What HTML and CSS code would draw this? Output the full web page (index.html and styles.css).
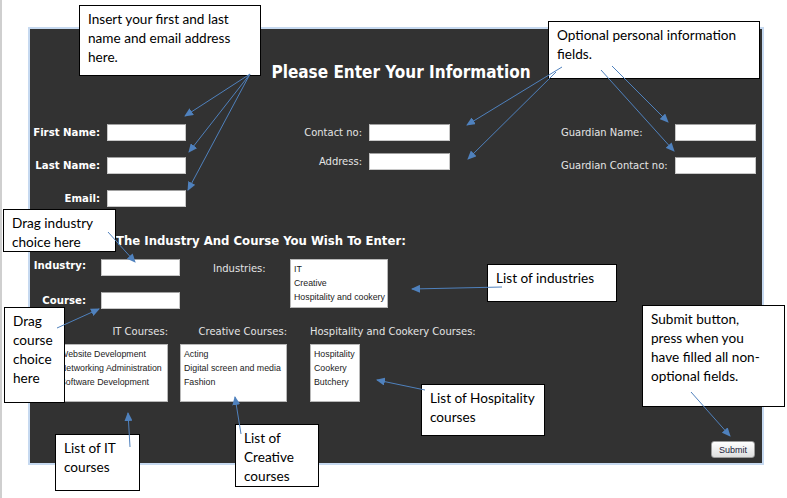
FILE: index.html
```html
<!DOCTYPE html>
<html lang="en">
<head>
  <meta charset="UTF-8" />
  <title>Student Enrolment Form</title>
  <link rel="stylesheet" href="styles.css">
</head>
<body>
  <div class="page">

    <!-- Enrolment form -->
    <main class="panel">
      <h1>Please Enter Your Information</h1>

      <div class="personal">
        <div class="group group-main">
          <label>First Name:</label><input type="text" />
          <label>Last Name:</label><input type="text" />
          <label>Email:</label><input type="text" />
        </div>
        <div class="group group-contact">
          <label>Contact no:</label><input type="text" />
          <label>Address:</label><input type="text" />
        </div>
        <div class="group group-guardian">
          <label>Guardian Name:</label><input type="text" />
          <label>Guardian Contact no:</label><input type="text" />
        </div>
      </div>

      <h2>The Industry And Course You Wish To Enter:</h2>

      <div class="choice">
        <div class="group group-drop">
          <label class="industry-label">Industry:</label><input type="text" />
          <label>Course:</label><input type="text" />
        </div>
        <span class="list-title">Industries:</span>
        <ul class="list list-industries">
          <li>IT</li>
          <li>Creative</li>
          <li>Hospitality and cookery</li>
        </ul>
      </div>

      <div class="courses">
        <div class="course course-it">
          <span class="list-title">IT Courses:</span>
          <ul class="list">
            <li>Website Development</li>
            <li>Networking Administration</li>
            <li>Software Development</li>
          </ul>
        </div>
        <div class="course course-creative">
          <span class="list-title">Creative Courses:</span>
          <ul class="list">
            <li>Acting</li>
            <li>Digital screen and media</li>
            <li>Fashion</li>
          </ul>
        </div>
        <div class="course course-hospitality">
          <span class="list-title">Hospitality and Cookery Courses:</span>
          <ul class="list">
            <li>Hospitality</li>
            <li>Cookery</li>
            <li>Butchery</li>
          </ul>
        </div>
      </div>

      <div class="actions">
        <button type="button">Submit</button>
      </div>
    </main>

    <!-- Annotation callouts -->
    <div class="note note-name">Insert your first and last<br>name and email address<br>here.</div>
    <div class="note note-optional">Optional personal information<br>fields.</div>
    <div class="note note-industry">Drag industry<br>choice here</div>
    <div class="note note-course">Drag<br>course<br>choice<br>here</div>
    <div class="note note-it">List of IT<br>courses</div>
    <div class="note note-creative">List of<br>Creative<br>courses</div>
    <div class="note note-industries">List of industries</div>
    <div class="note note-hospitality">List of Hospitality<br>courses</div>
    <div class="note note-submit">Submit button,<br>press when you<br>have filled all non-<br>optional fields.</div>

    <svg class="arrows" width="787" height="498" viewBox="0 0 787 498">
      <defs>
        <marker id="head" markerUnits="userSpaceOnUse" markerWidth="9" markerHeight="8" refX="8" refY="4" orient="auto">
          <path d="M0 0 L9 4 L0 8 Z" fill="#4f81bd" />
        </marker>
      </defs>
      <g stroke="#4f81bd" stroke-width="1" fill="none" marker-end="url(#head)">
        <line x1="248" y1="74" x2="183" y2="116" />
        <line x1="248" y1="74" x2="187" y2="152" />
        <line x1="248" y1="74" x2="186" y2="190" />
        <line x1="560" y1="67" x2="465" y2="125" />
        <line x1="554" y1="72" x2="466" y2="159" />
        <line x1="599" y1="70" x2="672" y2="151" />
        <line x1="610" y1="66" x2="666" y2="122" />
        <line x1="106" y1="232" x2="133" y2="262" />
        <line x1="55" y1="328" x2="97" y2="309" />
        <line x1="128" y1="447" x2="126" y2="413" />
        <line x1="239" y1="434" x2="233" y2="397" />
        <line x1="500" y1="287" x2="410" y2="289" />
        <line x1="423" y1="390" x2="375" y2="380" />
        <line x1="689" y1="392" x2="728" y2="436" />
      </g>
    </svg>

  </div>
</body>
</html>
```

FILE: styles.css
```css
* {
  margin: 0;
  padding: 0;
  box-sizing: border-box;
}

body {
  background: #ffffff;
  font-family: "Liberation Sans", Arial, sans-serif;
}

.page {
  position: relative;
  width: 787px;
  height: 498px;
  border-left: 2px solid #cfcfcf;
  padding: 27px 0 0 26px;
}

.panel {
  display: flex;
  flex-direction: column;
  width: 736px;
  height: 438px;
  background: #323232;
  border: 2px solid #c6d9f0;
  color: #e4e4e4;
}

h1 {
  margin-top: 32px;
  padding-left: 10px;
  text-align: center;
  font-family: "DejaVu Sans Condensed", "DejaVu Sans", sans-serif;
  font-size: 17px;
  line-height: 22px;
  color: #ffffff;
}

label {
  font-family: "DejaVu Sans Condensed", "DejaVu Sans", sans-serif;
  font-size: 11.1px;
  line-height: 14px;
  white-space: nowrap;
}

input {
  height: 17px;
  background: #ffffff;
  border: 1px solid #c8c8c8;
  border-top-color: #a0a0a0;
}

/* Personal details */
.personal {
  display: flex;
  align-items: flex-start;
  margin-top: 41px;
}

.group {
  display: grid;
  align-items: center;
  align-content: start;
  column-gap: 7px;
}

.group-main {
  grid-template-columns: 70px 79px;
  row-gap: 16px;
}

.group-main label,
.group-drop label {
  font-size: 11.3px;
  font-weight: bold;
  color: #ffffff;
  text-align: right;
}

.group-contact {
  grid-template-columns: 100px 81px;
  row-gap: 12px;
  margin-left: 76px;
}

.group-contact label {
  text-align: right;
}

.group-guardian {
  grid-template-columns: 107px 81px;
  row-gap: 16px;
  margin-left: 111px;
}

/* Industry + course choice */
h2 {
  margin-top: 26px;
  padding-left: 86px;
  font-family: "DejaVu Sans Condensed", "DejaVu Sans", sans-serif;
  font-size: 13px;
  line-height: 16px;
  color: #ffffff;
}

.choice {
  display: flex;
  align-items: flex-start;
  margin-top: 10px;
}

.group-drop {
  grid-template-columns: 56px 79px;
  column-gap: 15px;
  row-gap: 16px;
}

.industry-label {
  align-self: start;
}

.list-title {
  font-family: "DejaVu Sans Condensed", "DejaVu Sans", sans-serif;
  font-size: 11.1px;
  line-height: 15px;
  white-space: nowrap;
}

.choice .list-title {
  width: 77px;
  margin: 2px 0 0 33px;
}

.list {
  list-style: none;
  background: #ffffff;
  border: 1px solid #b8b8b8;
  padding: 2px 3px;
  font-size: 8.8px;
  line-height: 14px;
  color: #222222;
  white-space: nowrap;
}

.list-industries {
  width: 98px;
  height: 49px;
}

.courses {
  display: flex;
  margin-top: 15px;
  padding-left: 26px;
}

.course {
  display: flex;
  flex-direction: column;
  gap: 5px;
}

.course .list {
  height: 58px;
}

.course-it {
  width: 112px;
  text-align: right;
}

.course-creative {
  width: 107px;
  margin-left: 12px;
  text-align: right;
}

.course-it .list,
.course-creative .list {
  text-align: left;
}

.course-hospitality {
  margin-left: 23px;
}

.course-hospitality .list {
  width: 50px;
}

.actions {
  display: flex;
  justify-content: flex-end;
  margin-top: auto;
  padding: 0 7px 5px 0;
}

.actions button {
  width: 44px;
  height: 17px;
  border: 1px solid #9a9a9a;
  border-radius: 3px;
  background: linear-gradient(#ffffff, #dedede);
  font-family: "Liberation Sans", Arial, sans-serif;
  font-size: 9px;
  color: #1a1a3a;
}

/* Callouts */
.note {
  position: absolute;
  background: #ffffff;
  border: 1px solid #000000;
  padding: 4px 8px;
  font-family: Lato, "Open Sans", sans-serif;
  font-size: 13.6px;
  line-height: 19px;
  color: #000000;
  white-space: nowrap;
}

.note-name { left: 77px; top: 5px; width: 182px; height: 71px; }
.note-optional { left: 546px; top: 21px; width: 212px; height: 58px; }
.note-industry { left: 1px; top: 209px; width: 113px; height: 43px; }
.note-course { left: 2px; top: 307px; width: 61px; height: 96px; }
.note-it { left: 53px; top: 434px; width: 85px; height: 57px; }
.note-creative { left: 233px; top: 424px; width: 84px; height: 63px; }
.note-industries { left: 485px; top: 264px; width: 130px; height: 38px; }
.note-hospitality { left: 419px; top: 384px; width: 124px; height: 52px; }
.note-submit { left: 640px; top: 305px; width: 143px; height: 102px; }

.arrows {
  position: absolute;
  top: 0;
  left: 0;
  pointer-events: none;
}
```
